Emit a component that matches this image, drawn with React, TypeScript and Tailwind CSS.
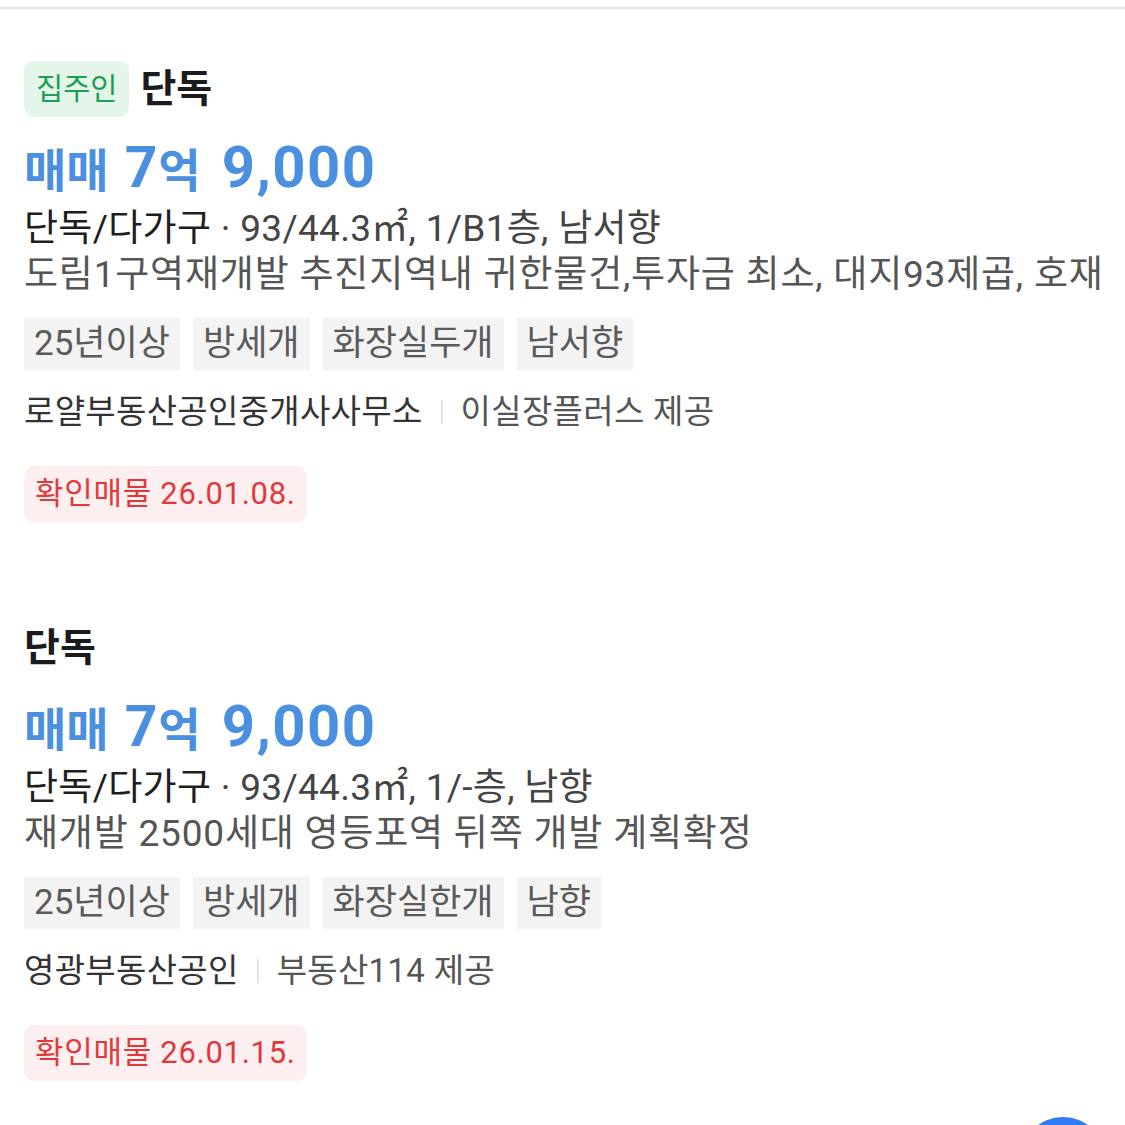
import React from "react"

const FONT = "font-['Roboto','Noto_Sans_CJK_KR',sans-serif]"

interface Listing {
  owner?: boolean
  spec: string
  desc: string
  tags: string[]
  agent: string
  source: string
  confirmed: string
}

const listings: Listing[] = [
  {
    owner: true,
    spec: "93/44.3㎡, 1/B1층, 남서향",
    desc: "도림1구역재개발 추진지역내 귀한물건,투자금 최소, 대지93제곱, 호재",
    tags: ["25년이상", "방세개", "화장실두개", "남서향"],
    agent: "로얄부동산공인중개사사무소",
    source: "이실장플러스 제공",
    confirmed: "26.01.08.",
  },
  {
    spec: "93/44.3㎡, 1/-층, 남향",
    desc: "재개발 2500세대 영등포역 뒤쪽 개발 계획확정",
    tags: ["25년이상", "방세개", "화장실한개", "남향"],
    agent: "영광부동산공인",
    source: "부동산114 제공",
    confirmed: "26.01.15.",
  },
]

function ListingItem({ item }: { item: Listing }) {
  return (
    <div className="flex flex-col px-6">
      <div className="flex h-[56px] items-center gap-[11px]">
        {item.owner && (
          <span className="flex h-[56px] items-center rounded-[10px] bg-[#e4f6ea] px-3 text-[29.5px] text-[#1e9e55]">
            집주인
          </span>
        )}
        <span className="text-[39px] font-bold text-[#1b1b1b]">단독</span>
      </div>
      <div className="mt-[22px] h-[56px] whitespace-nowrap text-[46px] font-bold leading-[56px] text-[#4b8fe0]">
        매매<span className="ml-[16px] text-[57px] tracking-[1px]">7</span>억
        <span className="ml-[21px] text-[58px] tracking-[1.5px]">9,000</span>
      </div>
      <div className="mt-[11px] whitespace-nowrap text-[37px] leading-[46px] tracking-[0.3px] text-[#444]">
        <span className="text-[#1e1e1e]">단독/다가구</span> · {item.spec}
      </div>
      <div className="whitespace-nowrap text-[37px] leading-[46px] tracking-[0.8px] text-[#555]">
        {item.desc}
      </div>
      <div className="mt-[20px] flex gap-[13px]">
        {item.tags.map((t) => (
          <span
            key={t}
            className="flex h-[52px] items-center bg-[#f3f3f3] px-[10px] text-[35px] text-[#5a5a5a]"
          >
            {t}
          </span>
        ))}
      </div>
      <div className="mt-[19px] flex items-center whitespace-nowrap text-[33px] leading-[46px] tracking-[0.3px]">
        <span className="text-[#333]">{item.agent}</span>
        <span className="mx-[18px] h-[24px] w-[2px] bg-[#e2e2e2]" />
        <span className="text-[#555]">{item.source}</span>
      </div>
      <div className="mt-[31px] flex">
        <span className="flex h-[56px] items-center rounded-[10px] bg-[#fdeff0] px-[11px] text-[31px] tracking-[0.7px] text-[#e0393c]">
          확인매물 {item.confirmed}
        </span>
      </div>
    </div>
  )
}

export default function App() {
  return (
    <div className={`relative h-[1125px] w-[1125px] overflow-hidden bg-white ${FONT}`}>
      <div className="mt-[7px] h-[2px] bg-[#e8e8e8]" />
      <div className="mt-[52px] flex flex-col gap-[98px]">
        {listings.map((l, i) => (
          <ListingItem key={i} item={l} />
        ))}
      </div>
      {/* floating button peeking in at the bottom */}
      <div className="absolute left-[1020px] top-[1117px] h-[86px] w-[86px] rounded-full bg-[#2f7cf6]" />
    </div>
  )
}
